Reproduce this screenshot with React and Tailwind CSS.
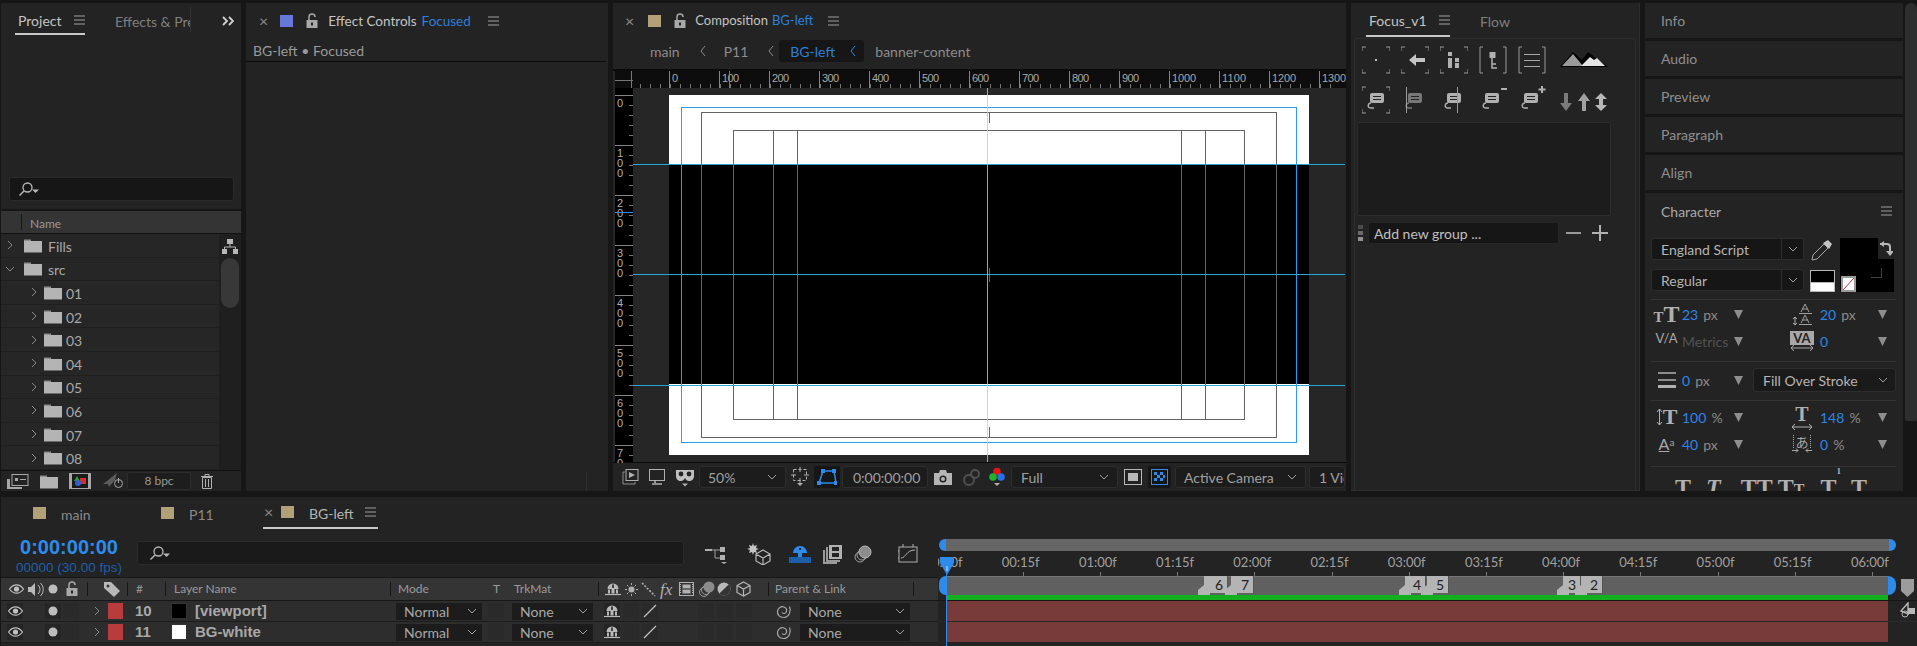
import React from 'react';

const BLUE = '#2d8ceb';
const TAN = '#b1a078';

function Ico({ w = 16, h = 16, vb, className = '', children }) {
  return (
    <svg width={w} height={h} viewBox={vb || `0 0 ${w} ${h}`} className={`shrink-0 ${className}`} fill="none">
      {children}
    </svg>
  );
}

const MenuIcon = () => (
  <Ico w={11} h={10}>
    <path d="M0 1h11M0 5h11M0 9h11" stroke="#a0a0a0" strokeWidth="1" />
  </Ico>
);

const Chevron = ({ open }) => (
  <Ico w={8} h={10}>
    <path d={open ? 'M0 3l4 4 4-4' : 'M2 1l4 4-4 4'} stroke="#8a8a8a" strokeWidth="1" />
  </Ico>
);

const SelectChevron = () => (
  <Ico w={10} h={6}>
    <path d="M1 1l4 4 4-4" stroke="#a0a0a0" strokeWidth="1" />
  </Ico>
);

const Folder = () => (
  <Ico w={18} h={15}>
    <path d="M0 3V1.5h7V3z" fill="#8e8e8e" />
    <rect x="0" y="3" width="18" height="11" fill="#b4b4b4" />
    <path d="M0 14h18v1H0z" fill="#6a6a6a" />
  </Ico>
);

const Lock = () => (
  <Ico w={12} h={16}>
    <path d="M3 7V4a3 3 0 0 1 6 0" stroke="#a8a8a8" strokeWidth="1.5" />
    <rect x="0.5" y="7" width="11" height="8" fill="#a8a8a8" />
    <rect x="5" y="9.5" width="2" height="3" fill="#232323" />
  </Ico>
);

const SearchIcon = () => (
  <Ico w={22} h={16}>
    <circle cx="9.5" cy="6.5" r="4.5" stroke="#b8b8b8" strokeWidth="1.3" />
    <path d="M6 10l-4.5 4.5" stroke="#b8b8b8" strokeWidth="1.5" />
    <path d="M14 8.5h7l-3.5 3.5z" fill="#b8b8b8" />
  </Ico>
);

const Swatch = ({ color }) => <span className="block w-[13px] h-[12px] shrink-0" style={{ backgroundColor: color }} />;

const Eye = () => (
  <Ico w={15} h={10}>
    <path d="M0.5 5C3 1.5 5 0.8 7.5 0.8S12 1.5 14.5 5C12 8.5 10 9.2 7.5 9.2S3 8.5 0.5 5z" stroke="#c0c0c0" strokeWidth="1.2" />
    <circle cx="7.5" cy="5" r="2.6" fill="#c0c0c0" />
  </Ico>
);

const Dot = () => (
  <Ico w={10} h={10}>
    <circle cx="5" cy="5" r="4.5" fill="#bdbdbd" />
  </Ico>
);

const Shy = ({ color = '#b8b8b8' }) => (
  <Ico w={16} h={14} vb="0 0 16 14">
    <path d="M2.5 7a5.5 5.5 0 0 1 11 0z" fill={color} />
    <path d="M6.5 4h3v7.5h-3zM3 7.5v4h2v-4zM11 7.5v4h2v-4z" fill={color} />
    <rect x="7.2" y="2.5" width="1.6" height="3.5" fill="#232323" />
    <path d="M0 12.5h16" stroke={color} strokeWidth="1.2" />
  </Ico>
);

const Spiral = () => (
  <Ico w={16} h={16}>
    <path d="M13.5 3.5C15.5 8 13 14.5 7.5 14.5 3.5 14.5 1 11.5 1.5 8 2 5 5 3 8 4c2.5.8 3.5 3.5 2 5.5-1 1.3-3 1.3-3.8 0" stroke="#a8a8a8" strokeWidth="1.2" />
  </Ico>
);

const Cube = ({ w = 15 }) => (
  <Ico w={w} h={16} vb="0 0 15 16">
    <path d="M7.5 1L14 4.5v7L7.5 15 1 11.5v-7zM1 4.5L7.5 8 14 4.5M7.5 8v7" stroke="#b8b8b8" strokeWidth="1.2" />
  </Ico>
);

const Circles = () => (
  <Ico w={17} h={16}>
    <circle cx="6" cy="11" r="4.5" stroke="#9a9a9a" />
    <circle cx="8" cy="9" r="4.5" stroke="#9a9a9a" />
    <circle cx="11" cy="6" r="5.5" fill="#8c8c8c" />
  </Ico>
);

const Film = ({ w = 15, h = 14 }) => (
  <Ico w={w} h={h} vb="0 0 15 14">
    <rect x="0.5" y="0.5" width="14" height="13" stroke="#b0b0b0" />
    <rect x="3.5" y="2.5" width="8" height="9" fill="#b0b0b0" />
    <path d="M3.5 7h8" stroke="#232323" />
    <path d="M1.5 2v10M13.5 2v10" stroke="#b0b0b0" strokeDasharray="1 1" />
  </Ico>
);

// Project panel
function ProjectRow({ label, depth = 0, open }) {
  return (
    <div className="h-[23.6px] flex items-center border-b border-[#1f1f1f] bg-[#262626]">
      <span className={depth ? 'ml-[29px]' : 'ml-[5px]'}>
        <Chevron open={open} />
      </span>
      <span className={depth ? 'ml-[6px]' : 'ml-[10px]'}>
        <Folder />
      </span>
      <span className={`text-[#a8a8a8] text-[14px] pt-[2px] ${depth ? 'ml-[4px]' : 'ml-[6px]'}`}>{label}</span>
    </div>
  );
}

function ProjectPanel() {
  const rows = ['01', '02', '03', '04', '05', '06', '07', '08'];
  return (
    <div className="w-[240px] bg-[#232323] flex flex-col relative overflow-hidden">
      <div className="h-[32px] flex items-center">
        <div className="ml-[14px] w-[70px] h-[32px] border-b-2 border-[#c8c8c8] flex items-center pt-[4px]">
          <span className="ml-[3px] text-[#c4c4c4] text-[14px]">Project</span>
          <span className="ml-[13px]"><MenuIcon /></span>
        </div>
        <div className="ml-[30px] w-[76px] overflow-hidden whitespace-nowrap pt-[4px] text-[14px] text-[#7f7f7f] border-r border-[#333]">
          Effects &amp; Presets
        </div>
        <span className="ml-[31px] pt-[3px]">
          <Ico w={12} h={10}>
            <path d="M1 1l4 4-4 4M7 1l4 4-4 4" stroke="#d0d0d0" strokeWidth="1.8" />
          </Ico>
        </span>
      </div>
      <div className="mt-[142px] ml-[8px] w-[225px] h-[24px] bg-[#161616] border border-[#2a2a2a] rounded-[3px] flex items-center pl-[8px]">
        <SearchIcon />
      </div>
      <div className="mt-[8px] border-t-2 border-[#161616] h-[25px] bg-[#343434] flex items-center border-b border-b-[#111]">
        <span className="ml-[20px] w-px h-[16px] bg-[#161616]" />
        <span className="ml-[8px] text-[12px] text-[#9a9a9a] pt-[4px]">Name</span>
      </div>
      <div className="flex h-[236px]">
        <div className="w-[218px] overflow-hidden">
          <ProjectRow label="Fills" />
          <ProjectRow label="src" open />
          {rows.map((r) => (
            <ProjectRow key={r} label={r} depth={1} />
          ))}
        </div>
        <div className="w-[22px] bg-[#1f1f1f] flex flex-col items-center">
          <div className="h-[24px] flex items-center">
            <Ico w={16} h={15}>
              <path d="M5 0h6v5H5zM0 10h5v5H0zM11 10h5v5h-5z" fill="#b8b8b8" />
              <path d="M8 5v3M2.5 10V8h11v2" stroke="#b8b8b8" />
            </Ico>
          </div>
          <div className="w-[18px] h-[50px] rounded-full bg-[#383838]" />
        </div>
      </div>
      <div className="h-[21px] border-t border-[#111] flex items-center">
        <span className="ml-[6px]">
          <Ico w={22} h={15}>
            <path d="M0 5h3v8h12v2H0z" fill="#a8a8a8" />
            <rect x="5" y="0.5" width="16" height="11" stroke="#a8a8a8" />
            <path d="M8 4h3v3H8zM13 5h6v1h-6z" fill="#a8a8a8" />
          </Ico>
        </span>
        <span className="ml-[11px]"><Folder /></span>
        <span className="ml-[11px]">
          <Ico w={22} h={16}>
            <rect width="22" height="16" fill="#a8a8a8" />
            <rect x="3" y="1" width="16" height="14" fill="#1a1a1a" />
            <path d="M8 3l3 5H5z" fill="#2d9c3a" />
            <rect x="11" y="5" width="6" height="6" fill="#d03030" />
            <circle cx="9" cy="10" r="3" fill="#3060d0" />
          </Ico>
        </span>
        <span className="ml-[12px]">
          <Ico w={21} h={16}>
            <path d="M0 11L9 4l5-4-2 7-6 7-1-3z" fill="#5c5c5c" />
            <circle cx="15.5" cy="10.5" r="4" stroke="#a8a8a8" />
            <path d="M15.5 5v5" stroke="#a8a8a8" />
          </Ico>
        </span>
        <div className="ml-[3px] w-[64px] h-[18px] border border-[#2c2c2c] rounded-[2px] bg-[#1d1d1d] flex items-center justify-center text-[12px] text-[#9a9a9a]">
          8 bpc
        </div>
        <span className="ml-[10px]">
          <Ico w={12} h={15}>
            <path d="M0 2.5h12M4 2V0.5h4V2" stroke="#b0b0b0" />
            <path d="M1.5 3.5h9V14.5h-9zM4.5 5v8M7.5 5v8" stroke="#b0b0b0" />
          </Ico>
        </span>
      </div>
    </div>
  );
}

function EffectPanel() {
  return (
    <div className="w-[362px] bg-[#232323] flex flex-col">
      <div className="h-[32px] flex items-center pt-[4px] text-[13.5px]">
        <span className="ml-[13px] text-[#8a8a8a] text-[16px] leading-none">×</span>
        <span className="ml-[12px]"><Swatch color="#6878d8" /></span>
        <span className="ml-[13px]"><Lock /></span>
        <span className="ml-[10px] text-[#c4c4c4]">Effect Controls</span>
        <span className="ml-[5px] text-[#2d7fd8]">Focused</span>
        <span className="ml-[17px]"><MenuIcon /></span>
      </div>
      <div className="h-[27px] flex items-center pl-[7px] pt-[4px] text-[14px] text-[#9a9a9a] border-b border-[#0c0c0c] mr-[2px]">
        BG-left • Focused
      </div>
      <div className="flex-1" />
      <div className="h-[20px] flex justify-end pr-[21px]">
        <span className="w-px h-full bg-[#2e2e2e]" />
      </div>
    </div>
  );
}

function Viewer() {
  const topTicks = Array.from({ length: 14 }, (_, i) => i);
  const leftTicks = Array.from({ length: 8 }, (_, i) => i);
  const minorsX = Array.from({ length: 70 }, (_, i) => 640 + i * 10);
  const minorsY = Array.from({ length: 38 }, (_, i) => 95 + i * 10);
  const vLines = [773.5, 797.5, 1181.5, 1205.5];
  const gridLine = '#636363';
  return (
    <svg width="733" height="394" viewBox="613 69 733 394" className="block shrink-0" shapeRendering="crispEdges">
      <rect x="613" y="69" width="733" height="394" fill="#262626" />
      <rect x="613" y="69" width="733" height="2" fill="#0a0a0a" />
      <rect x="615" y="71" width="731" height="17" fill="#0d0d0d" />
      <rect x="615" y="88" width="18" height="374" fill="#000" />
      <rect x="613" y="462" width="733" height="1" fill="#0a0a0a" />
      <path d="M631.5 71v17M615 80.5h18" stroke="#777" />
      {minorsX.map((x) => (
        <path key={x} d={`M${x + 0.5} 84v4`} stroke="#777" />
      ))}
      {topTicks.map((i) => (
        <g key={i}>
          <path d={`M${670 + i * 50 - 0.5} 71v17`} stroke="#858585" />
          <text x={672 + i * 50} y="82" fontSize="11" fill="#a8a8a8" fontFamily="'Liberation Sans', sans-serif" textLength={i === 0 ? 5 : i < 10 ? 17 : 24}>
            {i * 100}
          </text>
        </g>
      ))}
      <path d="M729.5 71v17" stroke={BLUE} />
      {minorsY.map((y) => (
        <path key={y} d={`M629 ${y + 0.5}h4`} stroke="#777" />
      ))}
      {leftTicks.map((i) => (
        <g key={i}>
          <path d={`M615 ${95 + i * 50 + 0.5}h18`} stroke="#858585" />
          {String(i * 100).split('').map((d, j) => (
            <text key={j} x="617" y={95 + i * 50 + 12 + j * 10} fontSize="11" fill="#b0b0b0" fontFamily="'Liberation Sans', sans-serif">
              {d}
            </text>
          ))}
        </g>
      ))}
      <path d="M615 212.5h18" stroke={BLUE} />

      <rect x="669" y="95" width="640" height="360" fill="#fff" />
      <rect x="669" y="165" width="640" height="219" fill="#000" />

      <rect x="701.5" y="112.5" width="575" height="325" fill="none" stroke={gridLine} />
      <rect x="733.5" y="130.5" width="511" height="289" fill="none" stroke={gridLine} />
      {vLines.map((x) => (
        <path key={x} d={`M${x} 130v289`} stroke={gridLine} />
      ))}
      <path d="M989.5 113v10M989.5 427v10M989.5 268v14" stroke={gridLine} />

      <rect x="681.5" y="107.5" width="615" height="335" fill="none" stroke="#2f9bef" />
      <path d="M633 164.5h712M633 274.5h712M633 385.5h712" stroke="#22a8d8" />
      <path d="M987.5 88v374" stroke="#8fdcf5" strokeOpacity="0.8" />
    </svg>
  );
}

const ToolBox = ({ w, ml, children, className = '' }) => (
  <div
    className={`h-[22px] bg-[#1c1c1c] border border-[#2d2d2d] rounded-[3px] flex items-center text-[14px] text-[#a0a0a0] shrink-0 ${className}`}
    style={{ width: w, marginLeft: ml }}
  >
    {children}
  </div>
);

const Chev = ({ blue }) => (
  <Ico w={6} h={12} className="block">
    <path d="M5 1L1 6l4 5" stroke={blue ? BLUE : '#8a8a8a'} />
  </Ico>
);

function CompPanel() {
  return (
    <div className="w-[733px] bg-[#232323] flex flex-col overflow-hidden">
      <div className="h-[32px] flex items-center pt-[4px] text-[13px]">
        <span className="ml-[12px] text-[#8a8a8a] text-[16px] leading-none">×</span>
        <span className="ml-[14px]"><Swatch color={TAN} /></span>
        <span className="ml-[13px]"><Lock /></span>
        <span className="ml-[9px] text-[#c4c4c4]">Composition</span>
        <span className="ml-[4px] text-[#2d7fd8]">BG-left</span>
        <span className="ml-[15px]"><MenuIcon /></span>
      </div>
      <div className="h-[34px] flex items-center text-[14px] text-[#8c8c8c] pb-[2px]">
        <span className="ml-[37px]">main</span>
        <span className="ml-[20px]"><Chev /></span>
        <span className="ml-[18px]">P11</span>
        <span className="ml-[20px]"><Chev /></span>
        <div className="ml-[5px] w-[85px] h-[22px] bg-[#161616] rounded-[3px] flex items-center shrink-0">
          <span className="ml-[11px] text-[#2d7fd8]">BG-left</span>
          <span className="ml-[15px]"><Chev blue /></span>
        </div>
        <span className="ml-[11px]">banner-content</span>
      </div>
      <Viewer />
      <div className="h-[28px] flex items-center">
        <span className="ml-[9px]">
          <Ico w={17} h={16}>
            <path d="M3 3H1v12h12v-2" stroke="#8e8e8e" />
            <rect x="4" y="0.5" width="12" height="11" stroke="#b0b0b0" />
            <path d="M7 3l6 3-6 3z" fill="#b0b0b0" />
          </Ico>
        </span>
        <span className="ml-[10px]">
          <Ico w={16} h={16}>
            <rect x="0.5" y="0.5" width="15" height="11" stroke="#b0b0b0" />
            <path d="M6 12v2M3 15h10" stroke="#b0b0b0" strokeWidth="1.6" />
          </Ico>
        </span>
        <span className="ml-[10px]">
          <Ico w={20} h={19}>
            <path d="M1 2h18v6c0 3-2 5-5 5-2 0-3-1-4-3-1 2-2 3-4 3-3 0-5-2-5-5z" fill="#c0c0c0" />
            <circle cx="6" cy="6" r="2.4" fill="#232323" />
            <circle cx="14" cy="6" r="2.4" fill="#232323" />
            <path d="M7 15.5h6l-3 3z" fill="#b0b0b0" />
          </Ico>
        </span>
        <ToolBox w={87} ml={4} className="justify-between px-[8px]">
          <span>50%</span>
          <SelectChevron />
        </ToolBox>
        <span className="ml-[5px]">
          <Ico w={18} h={20}>
            <rect x="2.5" y="2.5" width="13" height="11" stroke="#b0b0b0" strokeDasharray="3 2" />
            <path d="M9 0v5M9 11v5M0 8h5M13 8h5" stroke="#b0b0b0" />
            <path d="M6 16h6l-3 3z" fill="#b0b0b0" />
          </Ico>
        </span>
        <div className="ml-[5px] w-[26px] h-[22px] shrink-0 bg-[#161616] rounded-[2px] flex items-center justify-center">
          <Ico w={20} h={16}>
            <path d="M6 2h11l2 12H2z" stroke={BLUE} strokeWidth="1.5" />
            <path d="M4 0h4v4H4zM15 0h4v4h-4zM0 12h4v4H0zM17 12h3v4h-3z" fill={BLUE} />
          </Ico>
        </div>
        <ToolBox w={86} ml={2} className="pl-[10px] text-[#6e6e6e]">0:00:00:00</ToolBox>
        <span className="ml-[6px]">
          <Ico w={18} h={15}>
            <path d="M0 3h5l1-3h6l1 3h5v12H0z" fill="#b4b4b4" />
            <circle cx="9" cy="9" r="3.5" fill="#232323" />
            <circle cx="9" cy="9" r="2" fill="#b4b4b4" />
          </Ico>
        </span>
        <span className="ml-[10px]">
          <Ico w={18} h={17}>
            <circle cx="7" cy="11" r="5" stroke="#505050" strokeWidth="2" />
            <circle cx="13" cy="5" r="4" stroke="#505050" strokeWidth="2" />
          </Ico>
        </span>
        <span className="ml-[9px]">
          <Ico w={16} h={20}>
            <circle cx="8" cy="4.5" r="3.8" fill="#e01616" />
            <circle cx="4" cy="10" r="3.8" fill="#1fb32a" />
            <circle cx="12" cy="10" r="3.8" fill="#2a6fe8" />
            <path d="M5 16h6l-3 3z" fill="#b0b0b0" />
          </Ico>
        </span>
        <ToolBox w={107} ml={6} className="justify-between pl-[9px] pr-[8px]">
          <span>Full</span>
          <SelectChevron />
        </ToolBox>
        <span className="ml-[6px]">
          <Ico w={18} h={16}>
            <rect x="0.5" y="0.5" width="17" height="15" stroke="#b8b8b8" />
            <rect x="4" y="4" width="10" height="8" fill="#b8b8b8" />
          </Ico>
        </span>
        <div className="ml-[6px] w-[23px] h-[22px] shrink-0 bg-[#161616] rounded-[2px] flex items-center justify-center">
          <Ico w={17} h={16}>
            <rect x="0.5" y="0.5" width="16" height="15" stroke={BLUE} />
            <path d="M3 3h3v3H3zM9 3h3v3H9zM6 6h3v3H6zM12 6h2v3h-2zM3 9h3v3H3zM9 9h3v3H9z" fill={BLUE} />
          </Ico>
        </div>
        <ToolBox w={131} ml={4} className="justify-between pl-[8px] pr-[8px]">
          <span>Active Camera</span>
          <SelectChevron />
        </ToolBox>
        <ToolBox w={36} ml={3} className="pl-[9px] whitespace-nowrap overflow-hidden">1 View</ToolBox>
      </div>
    </div>
  );
}

const Corners = ({ children }) => (
  <Ico w={28} h={28}>
    <path d="M0 5V1h4M24 1h4v4M28 23v4h-4M4 27H0v-4" stroke="#9a9a9a" />
    {children}
  </Ico>
);

const Bubble = ({ x = 8, o = 1 }) => (
  <g opacity={o}>
    <rect x={x} y="7" width="14" height="10" rx="2" fill="#b0b0b0" />
    <path d={`M${x + 3} 10.5h8M${x + 3} 13.5h8`} stroke="#232323" />
    <path d={`M${x + 1} 17c-3 0-4 4-1 5h4`} stroke="#b0b0b0" strokeWidth="1.3" />
  </g>
);

function FocusPanel() {
  return (
    <div className="w-[289px] bg-[#232323] flex flex-col border-r border-[#2d2d2d] border-b">
      <div className="h-[32px] flex items-center pt-[4px] text-[14px]">
        <div className="ml-[15px] w-[84px] h-[32px] border-b-2 border-[#c8c8c8] flex items-center">
          <span className="ml-[3px] text-[#c4c4c4]">Focus_v1</span>
          <span className="ml-[12px]"><MenuIcon /></span>
        </div>
        <span className="ml-[30px] text-[#7f7f7f]">Flow</span>
      </div>
      <div className="mx-[3px] mt-[3px] flex-1 border-t border-x border-[#2d2d2d] rounded-t-[3px] pl-[7px]">
        <div className="flex mt-[7px] h-[28px]">
          <span className="w-[39px]"><Corners><rect x="13" y="13" width="2" height="2" fill="#c0c0c0" /></Corners></span>
          <span className="w-[39px]"><Corners><path d="M8 14l7-6v4h9v4h-9v4z" fill="#c4c4c4" /></Corners></span>
          <span className="w-[39px]"><Corners><path d="M8 6h4v4H8zM8 12h4v10H8zM15 12h4v4h-4zM15 17h4v5h-4z" fill="#b0b0b0" /></Corners></span>
          <span className="w-[39px]">
            <Ico w={28} h={28}>
              <path d="M4 1H1v26h3M24 1h3v26h-3" stroke="#9a9a9a" />
              <rect x="10.5" y="6" width="6" height="6" fill="#b0b0b0" />
              <path d="M13 12v10h5M13 18h4" stroke="#b0b0b0" strokeWidth="1.5" />
            </Ico>
          </span>
          <span className="w-[42px]">
            <Ico w={28} h={28}>
              <path d="M4 1H1v26h3M24 1h3v26h-3" stroke="#9a9a9a" />
              <path d="M6 8.5h16M6 14.5h16M6 20.5h16" stroke="#a8a8a8" />
            </Ico>
          </span>
          <span className="mt-[5px]">
            <Ico w={48} h={17}>
              <path d="M0 16L13 1l9 8 6-8 20 15z" fill="#000" />
              <path d="M2 15L13 3l10 12z" fill="#9a9a9a" />
              <path d="M21 15l9-9 4 3 3-2 8 8z" fill="#e4e4e4" />
            </Ico>
          </span>
        </div>
        <div className="flex mt-[12px] h-[28px]">
          <span className="w-[39px]"><Corners><Bubble x={8} /></Corners></span>
          <span className="w-[39px]">
            <Ico w={28} h={28}>
              <path d="M5.5 1v26" stroke="#9a9a9a" />
              <Bubble x={7} o={0.6} />
            </Ico>
          </span>
          <span className="w-[39px]">
            <Ico w={28} h={28}>
              <Bubble x={7} />
              <path d="M17.5 1v26" stroke="#9a9a9a" />
            </Ico>
          </span>
          <span className="w-[39px]">
            <Ico w={28} h={28}>
              <Bubble x={6} />
              <path d="M22 3h6" stroke="#b0b0b0" strokeWidth="2" />
            </Ico>
          </span>
          <span className="w-[42px]">
            <Ico w={28} h={28}>
              <Bubble x={6} />
              <path d="M24 0v7M20.5 3.5h7" stroke="#b0b0b0" strokeWidth="2" />
            </Ico>
          </span>
          <span className="mt-[7px]">
            <Ico w={48} h={18}>
              <path d="M4 0h4v10h4l-6 8-6-8h4z" fill="#7a7a7a" />
              <path d="M22 18h4V8h4l-6-8-6 8h4z" fill="#a0a0a0" />
              <path d="M41 0l6 6h-4v6h4l-6 6-6-6h4V6h-4z" fill="#b8b8b8" />
            </Ico>
          </span>
        </div>
        <div className="w-[254px] h-[94px] mt-[8px] -ml-[5px] bg-[#1c1c1c] border border-[#2d2d2d] rounded-[2px]" />
        <div className="flex items-center mt-[6px] h-[22px] -ml-[4px]">
          <span className="w-[6px] flex flex-col gap-[2px]">
            <i className="block w-[5px] h-[4px] bg-[#4a4a4a]" />
            <i className="block w-[5px] h-[4px] bg-[#6a6a6a]" />
            <i className="block w-[5px] h-[4px] bg-[#909090]" />
          </span>
          <div className="ml-[4px] w-[191px] h-[22px] bg-[#161616] border border-[#262626] rounded-[2px] flex items-center pl-[5px] text-[14px] text-[#c0c0c0]">
            Add new group ...
          </div>
          <span className="ml-[7px] w-[15px] h-[2px] bg-[#9a9a9a]" />
          <span className="ml-[11px]">
            <Ico w={16} h={16}>
              <path d="M0 8h16M8 0v16" stroke="#b0b0b0" strokeWidth="2" />
            </Ico>
          </span>
        </div>
      </div>
    </div>
  );
}

const Accordion = ({ label }) => (
  <div className="h-[35px] mb-[3px] flex items-center pl-[16px] text-[14px] text-[#8e8e8e] bg-[#232323]">{label}</div>
);

const Tri = () => (
  <Ico w={9} h={9}>
    <path d="M0 0h9L4.5 9z" fill="#8e8e8e" />
  </Ico>
);

const Glyph = ({ children, className = '' }) => (
  <span className={`font-['Liberation_Serif',serif] font-bold text-[#b0b0b0] leading-none ${className}`}>{children}</span>
);

function Metric({ icon, value, unit, dim, iconW, w, ml = 0 }) {
  return (
    <div className="flex items-center h-[24px]" style={{ width: w, marginLeft: ml }}>
      <div className="flex justify-center items-center shrink-0" style={{ width: iconW }}>{icon}</div>
      <div className="flex-1 text-[14px] whitespace-nowrap">
        {dim ? <span className="text-[#525252]">{value}</span> : <span className="text-[#2d85e6]">{value}</span>}
        {unit && <span className="ml-[5px] text-[#8a8a8a]">{unit}</span>}
      </div>
      <Tri />
      <span className="w-[5px]" />
    </div>
  );
}

const Sep = ({ mt = 0 }) => <div className="h-px bg-[#343434]" style={{ marginTop: mt }} />;

function CharacterPanel() {
  return (
    <div className="w-[258px] flex flex-col bg-[#161616]">
      <Accordion label="Info" />
      <Accordion label="Audio" />
      <Accordion label="Preview" />
      <Accordion label="Paragraph" />
      <Accordion label="Align" />
      <div className="flex-1 bg-[#232323] overflow-hidden pl-[6px] pr-[7px] text-[14px]">
        <div className="h-[45px] flex items-center justify-between pl-[10px] pr-[4px] pb-[9px] text-[#a8a8a8]">
          <span>Character</span>
          <MenuIcon />
        </div>
        <div className="h-[54px] flex">
          <div className="flex flex-col gap-[9px] w-[153px]">
            <div className="h-[22px] bg-[#161616] border border-[#2d2d2d] rounded-[3px] flex items-center pl-[9px] text-[#b4b4b4]">
              <span className="flex-1">England Script</span>
              <span className="w-[22px] h-full border-l border-[#2d2d2d] flex items-center justify-center"><SelectChevron /></span>
            </div>
            <div className="h-[22px] bg-[#161616] border border-[#2d2d2d] rounded-[3px] flex items-center pl-[9px] text-[#b4b4b4]">
              <span className="flex-1">Regular</span>
              <span className="w-[22px] h-full border-l border-[#2d2d2d] flex items-center justify-center"><SelectChevron /></span>
            </div>
          </div>
          <div className="ml-[5px] w-[26px] flex flex-col items-center">
            <Ico w={22} h={22} className="mt-[1px]">
              <path d="M1 21l1-5L13 5l4 4L6 20z" stroke="#a8a8a8" />
              <path d="M12 4l5-3 4 4-3 5z" fill="#c4c4c4" />
            </Ico>
            <div className="mt-[9px] w-[25px] h-[22px] border border-[#b8b8b8] flex flex-col">
              <span className="h-[11px] bg-[#000]" />
              <span className="h-[9px] bg-[#fff] border-t border-[#b8b8b8]" />
            </div>
          </div>
          <div className="ml-[5px] w-[54px] h-[54px] relative">
            <div className="absolute left-0 top-0 w-[38px] h-[54px] bg-[#000]" />
            <div className="absolute right-0 top-[21px] w-[16px] h-[33px] bg-[#000]" />
            <span className="absolute right-[1px] top-[3px]">
              <Ico w={14} h={15}>
                <path d="M1 3h7c2 0 3 1 3 3v6" stroke="#b8b8b8" strokeWidth="2" />
                <path d="M5 0v6L1 3zM7 10h8l-4 5z" fill="#b8b8b8" />
              </Ico>
            </span>
            <span className="absolute left-[31px] top-[30px]">
              <Ico w={11} h={10}>
                <path d="M10.5 0v9.5H0" stroke="#444" />
              </Ico>
            </span>
            <div className="absolute left-[1px] top-[38px] w-[15px] h-[16px] bg-white border-2 border-[#9a9a9a]">
              <Ico w={11} h={12} className="block">
                <path d="M0 12L11 0" stroke="#d03030" />
              </Ico>
            </div>
          </div>
        </div>
        <Sep mt={7} />
        <div className="flex mt-[2px]">
          <Metric w={97} iconW={31} value="23" unit="px" icon={<Glyph className="text-[24px]"><span className="text-[15px]">T</span>T</Glyph>} />
          <Metric w={108} ml={36} iconW={36} value="20" unit="px" icon={<Ico w={20} h={22}><path d="M3 14v8M1 16l2-2 2 2M1 20l2 2 2-2" stroke="#b0b0b0" /><path d="M9 9l4-8 4 8M10.5 6h5M7 10.5h13M9 20l4-8 4 8M10.5 17h5M7 21.5h13" stroke="#a0a0a0" /></Ico>} />
        </div>
        <div className="flex mt-[3px]">
          <Metric w={97} iconW={31} value="Metrics" dim icon={<span className="text-[13px] text-[#a8a8a8] leading-none pb-[5px] whitespace-nowrap">V/A</span>} />
          <Metric w={108} ml={36} iconW={36} value="0" icon={<div className="flex flex-col items-center"><span className="w-[24px] h-[14px] bg-[#a8a8a8] text-[13px] leading-[14px] font-bold text-[#232323] text-center">VA</span><Ico w={24} h={6}><path d="M1 3h22M4 0L1 3l3 3M20 0l3 3-3 3" stroke="#a8a8a8" /></Ico></div>} />
        </div>
        <Sep mt={8} />
        <div className="flex mt-[6px] items-center h-[24px]">
          <Metric w={97} iconW={31} value="0" unit="px" icon={<Ico w={18} h={16}><path d="M0 1h18M0 8h18" stroke="#b0b0b0" strokeWidth="1.5" /><path d="M0 14.5h18" stroke="#b0b0b0" strokeWidth="3" /></Ico>} />
          <div className="ml-[5px] w-[143px] h-[24px] bg-[#1a1a1a] border border-[#2d2d2d] rounded-[3px] flex items-center justify-between pl-[9px] pr-[7px] text-[#b4b4b4] whitespace-nowrap">
            <span>Fill Over Stroke</span>
            <SelectChevron />
          </div>
        </div>
        <Sep mt={8} />
        <div className="flex mt-[4px]">
          <Metric w={97} iconW={31} value="100" unit="%" icon={<div className="flex items-center"><Ico w={7} h={18}><path d="M3.5 1v16M1 4l2.5-3L6 4M1 14l2.5 3L6 14" stroke="#b0b0b0" /></Ico><Glyph className="text-[22px]">T</Glyph></div>} />
          <Metric w={108} ml={36} iconW={36} value="148" unit="%" icon={<div className="flex flex-col items-center"><Glyph className="text-[20px]">T</Glyph><Ico w={22} h={6}><path d="M1 3h20M4 0L1 3l3 3M18 0l3 3-3 3" stroke="#b0b0b0" /></Ico></div>} />
        </div>
        <div className="flex mt-[3px]">
          <Metric w={97} iconW={31} value="40" unit="px" icon={<div className="flex items-end"><span className="text-[16px] text-[#a8a8a8] leading-none underline">A</span><span className="text-[10px] text-[#a8a8a8] leading-none pb-[5px]">a</span></div>} />
          <Metric w={108} ml={36} iconW={36} value="0" unit="%" icon={<div className="flex flex-col items-center"><span className="font-['Noto_Sans_CJK_JP',sans-serif] text-[13px] text-[#a8a8a8] leading-none border-x border-dotted border-[#a8a8a8] px-[1px]">あ</span><Ico w={20} h={5}><path d="M0 2.5h6M4 .5l2 2-2 2M20 2.5h-6M16 .5l-2 2 2 2" stroke="#a8a8a8" /></Ico></div>} />
        </div>
        <Sep mt={10} />
        <div className="flex items-start pt-[8px] h-[30px] text-[24px]">
          <Glyph className="ml-[24px]">T</Glyph>
          <Glyph className="ml-[15px] italic">T</Glyph>
          <Glyph className="ml-[20px]">TT</Glyph>
          <Glyph className="ml-[5px]">T<span className="text-[16px]">T</span></Glyph>
          <Glyph className="ml-[16px]">T<sup className="text-[9px] align-top">1</sup></Glyph>
          <Glyph className="ml-[10px]">T<sub className="text-[9px] align-baseline">1</sub></Glyph>
        </div>
      </div>
    </div>
  );
}

// Timeline
const Cell = ({ w = 16, ml = 0, children, bg = 'bg-[#2a2a2a]' }) => (
  <div className={`h-[16px] shrink-0 flex items-center justify-center ${bg}`} style={{ width: w, marginLeft: ml }}>
    {children}
  </div>
);

const RowSelect = ({ w, ml = 0, label }) => (
  <div
    className="h-[17px] shrink-0 bg-[#1c1c1c] flex items-center justify-between pl-[8px] pr-[5px] text-[14px] text-[#a8a8a8]"
    style={{ width: w, marginLeft: ml }}
  >
    <span>{label}</span>
    <SelectChevron />
  </div>
);

function LayerRow({ num, name, color }) {
  return (
    <div className="h-[21px] flex items-center border-b border-[#1c1c1c] bg-[#2d2d2d]">
      <Cell ml={6} bg="bg-[#252525]"><Eye /></Cell>
      <Cell ml={22} bg="bg-[#252525]"><Dot /></Cell>
      <Cell ml={2} />
      <span className="ml-[14px] w-[8px] shrink-0"><Chevron /></span>
      <span className="ml-[7px] w-[15px] h-[16px] shrink-0 bg-[#b83c3c]" />
      <span className="ml-[12px] w-[36px] shrink-0 font-['Liberation_Sans',sans-serif] font-bold text-[15px] text-[#a8a8a8]">{num}</span>
      <span className="w-[16px] h-[16px] shrink-0 border border-[#333]" style={{ backgroundColor: color }} />
      <span className="ml-[8px] w-[201px] shrink-0 font-['Liberation_Sans',sans-serif] font-bold text-[15px] text-[#a8a8a8]">{name}</span>
      <RowSelect w={86} label="Normal" />
      <Cell ml={6} />
      <RowSelect w={81} ml={8} label="None" />
      <Cell ml={11} bg="bg-[#252525]"><Shy /></Cell>
      <Cell ml={3} />
      <Cell ml={3}>
        <Ico w={14} h={14}><path d="M1 13L13 1" stroke="#c0c0c0" strokeWidth="1.3" /></Ico>
      </Cell>
      <Cell ml={40} />
      <Cell ml={3} />
      <Cell ml={3} />
      <span className="ml-[24px]"><Spiral /></span>
      <RowSelect w={110} ml={8} label="None" />
    </div>
  );
}

const HeadDiv = ({ ml = 0 }) => <span className="w-px h-[14px] bg-[#161616] shrink-0" style={{ marginLeft: ml }} />;

function TimelineLeft() {
  return (
    <div className="w-[937px] flex flex-col shrink-0">
      <div className="h-[32px] flex items-center text-[14px] text-[#8a8a8a]">
        <span className="ml-[32px]"><Swatch color={TAN} /></span>
        <span className="ml-[15px] pt-[2px] w-[29px]">main</span>
        <span className="ml-[71px]"><Swatch color={TAN} /></span>
        <span className="ml-[15px] pt-[2px] w-[22px]">P11</span>
        <div className="ml-[52px] w-[115px] h-[32px] border-b-2 border-[#c8c8c8] flex items-center">
          <span className="text-[16px] leading-none ml-[1px] w-[7px]">×</span>
          <span className="ml-[10px]"><Swatch color={TAN} /></span>
          <span className="ml-[15px] pt-[2px] w-[46px] text-[#b4b4b4]">BG-left</span>
          <span className="ml-[10px]"><MenuIcon /></span>
        </div>
      </div>
      <div className="h-[48px] flex">
        <div className="w-[136px] flex flex-col items-center pt-[6px] font-['Liberation_Sans',sans-serif] shrink-0">
          <span className="text-[20px] leading-[24px] font-bold text-[#2d8ceb]">0:00:00:00</span>
          <span className="text-[13.5px] leading-[15px] text-[#1d5ea8] mt-[1px] whitespace-nowrap">00000 (30.00 fps)</span>
        </div>
        <div className="mt-[12px] w-[547px] h-[24px] bg-[#1a1a1a] border border-[#2a2a2a] rounded-[3px] flex items-center pl-[11px]">
          <SearchIcon />
        </div>
        <div className="flex items-center h-[48px] pt-[2px]">
          <span className="ml-[21px]">
            <Ico w={22} h={20}>
              <path d="M0 6h7" stroke="#b0b0b0" strokeWidth="2" />
              <path d="M7 6h9M10 6v8h7" stroke="#a0a0a0" />
              <rect x="15" y="3" width="5" height="5" fill="#b0b0b0" />
              <rect x="15" y="11" width="5" height="5" fill="#b0b0b0" />
              <path d="M16 18h6l-3 2z" fill="#b0b0b0" />
            </Ico>
          </span>
          <span className="ml-[20px]">
            <Ico w={24} h={22}>
              <path d="M6 0l1 3 3-1-1 3 3 1-3 1 1 3-3-1-1 3-1-3-3 1 1-3-3-1 3-1-1-3 3 1z" fill="#c4c4c4" />
              <path d="M16 7l7 4v7l-7 4-7-4v-7zM9 11l7 4 7-4M16 15v7" stroke="#b8b8b8" strokeWidth="1.2" />
            </Ico>
          </span>
          <span className="ml-[18px]">
            <Ico w={22} h={18}>
              <path d="M4 8a7 7 0 0 1 14 0z" fill={BLUE} />
              <rect x="10" y="3" width="2" height="3" fill="#232323" />
              <rect x="9" y="5" width="4" height="8" fill={BLUE} />
              <rect x="0" y="12" width="22" height="6" fill="#1d5ea8" />
            </Ico>
          </span>
          <span className="ml-[12px]">
            <Ico w={19} h={19}>
              <path d="M0 5h2v12h12v2H0z" fill="#9a9a9a" />
              <path d="M3 2h2v13h12v2H3z" fill="#9a9a9a" />
              <rect x="6" y="0" width="13" height="14" fill="#b0b0b0" />
              <rect x="9" y="2" width="7" height="4" fill="#232323" />
              <rect x="9" y="8" width="7" height="4" fill="#232323" />
            </Ico>
          </span>
          <span className="ml-[12px]"><Ico w={18} h={18}><circle cx="6" cy="12" r="5" stroke="#a0a0a0" /><circle cx="8" cy="10" r="5" stroke="#a0a0a0" /><circle cx="11" cy="7" r="6" fill="#8c8c8c" stroke="#b8b8b8" /></Ico></span>
          <span className="ml-[26px]">
            <Ico w={20} h={20}>
              <rect x="1" y="3" width="18" height="15" stroke="#b0b0b0" />
              <path d="M3 14c5 0 5-8 14-8" stroke="#b0b0b0" />
              <path d="M5 0v3M15 0v3M0 7h1M0 14h1" stroke="#b0b0b0" />
            </Ico>
          </span>
        </div>
      </div>
      <div className="h-[24px] bg-[#343434] flex items-center text-[12px] text-[#9a9a9a] border-t border-[#161616] border-b border-b-[#161616]">
        <span className="ml-[8px]"><Eye /></span>
        <span className="ml-[4px]">
          <Ico w={16} h={15}>
            <path d="M0 5h3l4-4v13l-4-4H0z" fill="#b8b8b8" />
            <path d="M10 3a6 6 0 0 1 0 9M12.5 1a9 9 0 0 1 0 13" stroke="#b8b8b8" />
          </Ico>
        </span>
        <span className="ml-[4px]"><Dot /></span>
        <span className="ml-[8px]"><Lock /></span>
        <HeadDiv ml={9} />
        <span className="ml-[16px]">
          <Ico w={16} h={15}>
            <path d="M0 0h7l9 9-6 6-10-9z" fill="#b8b8b8" />
            <circle cx="4" cy="4" r="1.5" fill="#343434" />
          </Ico>
        </span>
        <HeadDiv ml={7} />
        <span className="ml-[8px] w-[8px]">#</span>
        <HeadDiv ml={21} />
        <span className="ml-[8px] w-[216px] shrink-0">Layer Name</span>
        <HeadDiv />
        <span className="ml-[7px] w-[95px] shrink-0">Mode</span>
        <span className="w-[21px] shrink-0">T</span>
        <span className="w-[84px] shrink-0">TrkMat</span>
        <HeadDiv />
        <span className="ml-[6px]"><Shy /></span>
        <span className="ml-[4px]">
          <Ico w={13} h={13}>
            <circle cx="6.5" cy="6.5" r="3" fill="#b0b0b0" />
            <path d="M6.5 0v2M6.5 11v2M0 6.5h2M11 6.5h2M2 2l1.5 1.5M9.5 9.5L11 11M2 11l1.5-1.5M9.5 3.5L11 2" stroke="#b0b0b0" />
          </Ico>
        </span>
        <span className="ml-[3px]">
          <Ico w={15} h={15}>
            <path d="M1 1l13 13" stroke="#b0b0b0" strokeWidth="1.6" strokeDasharray="2 1.5" />
          </Ico>
        </span>
        <span className="ml-[4px] font-['Liberation_Serif',serif] italic text-[17px] text-[#b0b0b0] leading-none w-[15px] shrink-0">fx</span>
        <span className="ml-[4px]"><Film /></span>
        <span className="ml-[4px]"><Circles /></span>
        <span className="ml-[2px]">
          <Ico w={14} h={14}>
            <circle cx="7" cy="7" r="6.5" fill="#b8b8b8" />
            <path d="M11.6 2.4A6.5 6.5 0 0 1 2.4 11.6z" fill="#343434" />
          </Ico>
        </span>
        <span className="ml-[5px]"><Cube /></span>
        <HeadDiv ml={17} />
        <span className="ml-[6px] w-[138px] shrink-0 whitespace-nowrap">Parent &amp; Link</span>
        <HeadDiv />
      </div>
      <LayerRow num="10" name="[viewport]" color="#000" />
      <LayerRow num="11" name="BG-white" color="#fff" />
    </div>
  );
}

const TICKS = ['00:00f', '00:15f', '01:00f', '01:15f', '02:00f', '02:15f', '03:00f', '03:15f', '04:00f', '04:15f', '05:00f', '05:15f', '06:00f'];
const MARKERS = [
  { n: '6', x: 266, w: 24 },
  { n: '7', x: 293, w: 23 },
  { n: '4', x: 467, w: 21 },
  { n: '5', x: 489, w: 22 },
  { n: '3', x: 625, w: 18 },
  { n: '2', x: 643, w: 22 },
];

function TimelineRight() {
  return (
    <div className="flex-1 relative overflow-hidden flex flex-col pt-[42px]">
      <div className="h-[12px] ml-[1px] mr-[21px] flex">
        <span className="w-[7px] bg-[#2d8ceb] rounded-l-full" />
        <span className="flex-1 bg-[#666]" />
        <span className="w-[7px] bg-[#2d8ceb] rounded-r-full" />
      </div>
      <div className="h-[25px] relative">
        {TICKS.map((t, i) => (
          <div key={t} className="absolute top-0 flex flex-col items-center w-[60px]" style={{ left: 8 + i * 77.2 - 30 }}>
            <span className="text-[13px] text-[#a0a0a0] leading-[20px] mt-[1px] whitespace-nowrap -ml-[5px]">{t}</span>
            <span className="w-px h-[5px] bg-[#777]" />
          </div>
        ))}
      </div>
      <div className="h-[19px] ml-[1px] mr-[21px] flex relative">
        <span className="w-[7px] bg-[#2d8ceb] rounded-l-full" />
        <span className="flex-1 bg-[#606060] border-t border-[#777]" />
        <span className="w-[8px] bg-[#2d8ceb] rounded-r-full" />
        {MARKERS.map((m) => (
          <div key={m.n} className="absolute top-0 h-[18px]" style={{ left: m.x - 1 }}>
            <div className="h-[17px] bg-[#b4b4b4] text-[#222] text-[14px] leading-[17px] text-right pr-[4px] border-r border-[#555]" style={{ width: m.w }}>
              {m.n}
            </div>
            <span className="absolute -left-[6px] top-[9px]">
              <Ico w={12} h={10}>
                <path d="M0 10V5l6-5 6 5v5z" fill="#b4b4b4" />
              </Ico>
            </span>
          </div>
        ))}
      </div>
      <div className="h-[5px] ml-[8px] mr-[29px] bg-[#12b01e]" />
      <div className="h-[1px] bg-[#161616]" />
      <div className="ml-[8px] mr-[29px] h-[20px] bg-[#793a3a]" />
      <div className="h-[1px] bg-[#2a2a2a]" />
      <div className="ml-[8px] mr-[29px] h-[20px] bg-[#793a3a]" />
      {/* playhead */}
      <div className="absolute left-[8px] top-[60px] bottom-0 w-px bg-[#2d8ceb]" />
      <span className="absolute left-[2px] top-[60px]">
        <Ico w={14} h={18}>
          <path d="M0 0h14v6L7 18 0 6z" fill="#2d8ceb" />
          <path d="M7 9v5" stroke="#ddd" />
        </Ico>
      </span>
      <span className="absolute right-[3px] top-[82px]">
        <Ico w={13} h={18}>
          <path d="M0 0h13v12l-6.5 6L0 12z" fill="#9c9c9c" />
        </Ico>
      </span>
      <span className="absolute right-[2px] top-[105px]">
        <Ico w={16} h={16}>
          <path d="M2 9L9 1v11z" stroke="#b8b8b8" strokeWidth="1.4" />
          <rect x="9" y="6" width="7" height="6" fill="#b8b8b8" />
          <circle cx="6" cy="12" r="3" stroke="#b8b8b8" />
        </Ico>
      </span>
    </div>
  );
}

export default function App() {
  return (
    <div className="w-[1917px] h-[646px] bg-[#161616] overflow-hidden pt-[3px] font-['Lato',sans-serif]">
      <div className="flex h-[488px] pl-[1px] gap-[5px]">
        <ProjectPanel />
        <EffectPanel />
        <CompPanel />
        <FocusPanel />
        <CharacterPanel />
        <div className="w-[12px] -ml-[3px] h-[418px] bg-[#2e2e2e] rounded-t-[6px] rounded-b-[2px]" />
      </div>
      <div className="mt-[6px] ml-[1px] h-[149px] bg-[#232323] flex">
        <TimelineLeft />
        <TimelineRight />
      </div>
    </div>
  );
}
